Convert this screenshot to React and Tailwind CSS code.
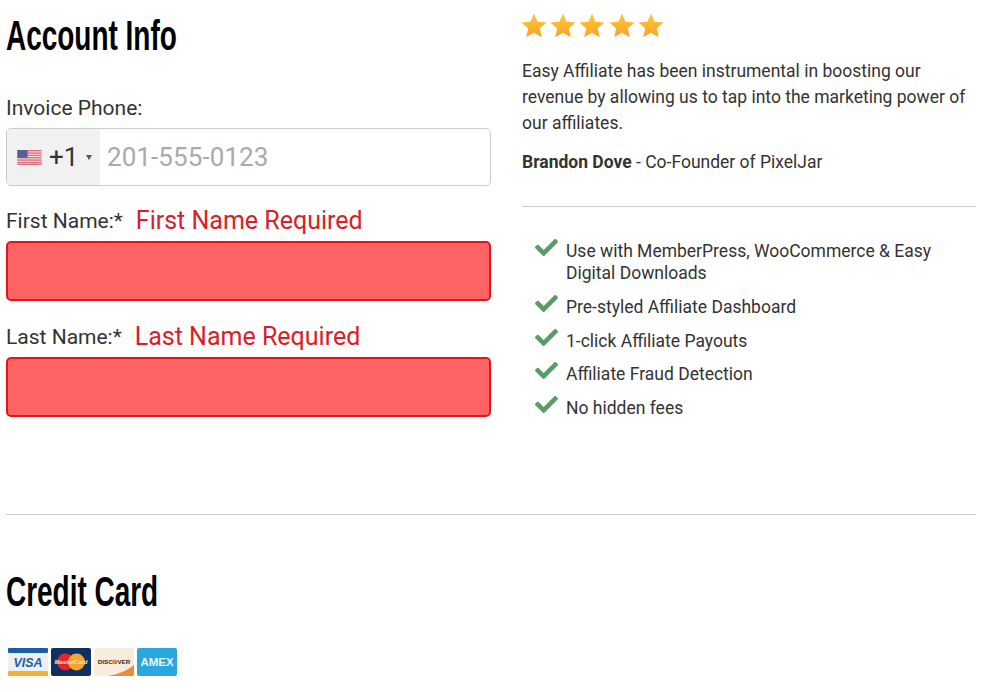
import React from 'react';
import { FaCheck } from 'react-icons/fa';

const Heading = ({ children }) => (
    <h2 className="font-['Liberation_Sans',sans-serif] font-bold text-[43px] leading-[45px] text-black whitespace-nowrap origin-left scale-x-[0.65]">
        {children}
    </h2>
);

const Star = () => (
    <svg viewBox="0 0 26 25" className="w-[26px] h-[25px] block">
        <defs>
            <linearGradient id="starFill" x1="0" y1="0" x2="0" y2="1">
                <stop offset="0" stopColor="#fdc83a" />
                <stop offset="1" stopColor="#f9a325" />
            </linearGradient>
        </defs>
        <path d="M13 0.5l3.6 8.3 9 .8-6.8 5.9 2 8.8L13 19.7l-7.8 4.6 2-8.8L.4 9.6l9-.8z" fill="url(#starFill)" />
    </svg>
);

const UsFlag = () => (
    <svg viewBox="0 0 26 16" className="w-[27px] h-[15px] block">
        <rect width="26" height="16" fill="#f1e6e8" />
        {[0, 2.5, 5, 7.5, 10, 12.5, 14.5].map(y => (
            <rect key={y} y={y} width="26" height="1.5" fill="#e0727f" />
        ))}
        <rect width="11" height="8.5" fill="#585e96" />
    </svg>
);

const Field = ({ label, error }) => (
    <div>
        <div className="flex items-center gap-[13px] h-[32px] leading-[32px]">
            <span className="text-[21px] text-[#333] pt-[2px]">{label}</span>
            <span className="text-[25px] text-[#d9202a] pt-[2px]">{error}</span>
        </div>
        <div className="h-[60px] mt-[5px] rounded-[5px] border-2 border-[#e5141c] bg-[#ff6464]" />
    </div>
);

const Feature = ({ children }) => (
    <li className="flex">
        <FaCheck className="w-[23px] h-[23px] -mt-[4px] ml-[13px] mr-[8px] shrink-0 text-[#5b9b68]" />
        <span>{children}</span>
    </li>
);

const Visa = () => (
    <svg viewBox="0 0 40 28" className="w-[40px] h-[28px] block">
        <rect width="40" height="28" rx="1" fill="#edf0f3" />
        <rect width="40" height="5" rx="1" fill="#1c5ea3" />
        <rect y="23" width="40" height="5" rx="1" fill="#f9ae2f" />
        <text x="20" y="18.5" textAnchor="middle" fontFamily="Liberation Sans" fontWeight="700" fontStyle="italic" fontSize="12.5" fill="#265d9a">VISA</text>
    </svg>
);

const Mastercard = () => (
    <svg viewBox="0 0 40 28" className="w-[40px] h-[28px] block">
        <rect width="40" height="28" rx="2" fill="#12305f" />
        <circle cx="14.5" cy="14" r="8.5" fill="#e2252f" />
        <circle cx="25.5" cy="14" r="8.5" fill="#f8a62b" />
        <text x="20" y="16" textAnchor="middle" fontFamily="Liberation Sans" fontWeight="700" fontStyle="italic" fontSize="6" fill="#fbe3c8">MasterCard</text>
    </svg>
);

const Discover = () => (
    <svg viewBox="0 0 40 28" className="w-[40px] h-[28px] block">
        <rect width="40" height="28" rx="2" fill="#f7ecdd" />
        <path d="M14 28C25 26 34 22 40 17v9a2 2 0 0 1-2 2z" fill="#ee8a35" />
        <text x="20" y="16" textAnchor="middle" fontFamily="Liberation Sans" fontWeight="700" fontSize="6.2" fill="#2a2a2a">DISCOVER</text>
        <circle cx="20.6" cy="13.8" r="2.3" fill="#ee8a35" />
    </svg>
);

const Amex = () => (
    <svg viewBox="0 0 40 28" className="w-[40px] h-[28px] block">
        <rect width="40" height="28" rx="2" fill="#2ba6de" />
        <text x="20" y="18" textAnchor="middle" fontFamily="Liberation Sans" fontWeight="700" fontSize="11.5" fill="#eaf6fc">AMEX</text>
    </svg>
);

export default function App() {
    return (
        <div className="w-[998px] h-[692px] overflow-hidden bg-white pl-[6px] font-['Roboto',sans-serif] text-[#333]">
            <div className="flex gap-[31px] h-[514px]">
                <div className="w-[485px] pt-[13px]">
                    <Heading>Account Info</Heading>
                    <div className="text-[21px] leading-[30px] mt-[35px]">Invoice Phone:</div>
                    <div className="h-[58px] mt-[5px] flex rounded-[5px] border border-[#ccc] overflow-hidden">
                        <div className="w-[93px] flex items-center pl-[9px] bg-[#f1f1f1]">
                            <UsFlag />
                            <span className="text-[26px] ml-[6px]">+1</span>
                            <span className="ml-[8px] w-0 h-0 border-x-[3.5px] border-x-transparent border-t-[5px] border-t-[#555]" />
                        </div>
                        <div className="flex items-center pl-[7px] text-[26px] tracking-[0.08px] text-[#aaa]">201-555-0123</div>
                    </div>
                    <div className="mt-[18px]">
                        <Field label="First Name:*" error="First Name Required" />
                    </div>
                    <div className="mt-[19px]">
                        <Field label="Last Name:*" error="Last Name Required" />
                    </div>
                </div>
                <div className="w-[454px] pt-[13px]">
                    <div className="flex gap-[3.2px] -ml-[1px]">
                        <Star /><Star /><Star /><Star /><Star />
                    </div>
                    <p className="text-[17.5px] leading-[26px] mt-[20px]">
                        Easy Affiliate has been instrumental in boosting our revenue by allowing us to tap into the marketing power of our affiliates.
                    </p>
                    <p className="text-[17.5px] leading-[26px] mt-[13px]">
                        <strong className="font-bold">Brandon Dove</strong> - Co-Founder of PixelJar
                    </p>
                    <div className="border-t border-[#ccc] mt-[31px]" />
                    <ul className="mt-[33px] flex flex-col gap-[11.8px] text-[17.5px] leading-[22px]">
                        <Feature>Use with MemberPress, WooCommerce &amp; Easy Digital Downloads</Feature>
                        <Feature>Pre-styled Affiliate Dashboard</Feature>
                        <Feature>1-click Affiliate Payouts</Feature>
                        <Feature>Affiliate Fraud Detection</Feature>
                        <Feature>No hidden fees</Feature>
                    </ul>
                </div>
            </div>
            <div className="w-[970px] border-t border-[#ccc]" />
            <div className="pt-[54px]">
                <Heading>Credit Card</Heading>
                <div className="flex gap-[3px] mt-[34px] ml-[2px]">
                    <Visa /><Mastercard /><Discover /><Amex />
                </div>
            </div>
        </div>
    );
}
